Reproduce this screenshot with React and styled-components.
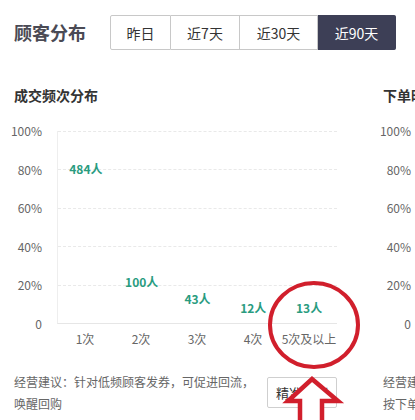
import React from "react";
import styled, { createGlobalStyle } from "styled-components";

const Global = createGlobalStyle`
  html, body { margin: 0; padding: 0; background: #fff; }
  body {
    width: 415px; height: 420px; overflow: hidden;
    font-family: "Noto Sans CJK SC", "Noto Sans", "Liberation Sans", sans-serif;
  }
`;

const Page = styled.div`
  position: relative;
  width: 415px;
  height: 420px;
  overflow: hidden;
`;

const Header = styled.div`
  display: flex;
  align-items: center;
  gap: 24px;
  padding: 15px 14px 0;
  height: 35px;
`;

const Title = styled.h1`
  margin: 0;
  font-size: 18px;
  font-weight: 700;
  color: #4a4a54;
  line-height: 35px;
  white-space: nowrap;
`;

const Tabs = styled.div`
  display: flex;
  height: 35px;
`;

const Tab = styled.button`
  width: ${(p) => p.$w}px;
  height: 35px;
  padding: 0;
  font-family: inherit;
  font-size: 14px;
  color: ${(p) => (p.$active ? "#fff" : "#333")};
  background: ${(p) => (p.$active ? "#3d3f56" : "#fff")};
  border: 1px solid ${(p) => (p.$active ? "#3d3f56" : "#c8c8c8")};
  border-left-width: ${(p) => (p.$first ? 1 : 0)}px;
  border-radius: ${(p) => (p.$first ? "2px 0 0 2px" : p.$last ? "0 2px 2px 0" : "0")};
  cursor: pointer;
`;

const Panels = styled.div`
  display: flex;
  gap: 46px;
  padding: 35px 0 0 14px;
`;

const Panel = styled.section`
  flex: 0 0 323px;
  display: flex;
  flex-direction: column;
`;

const PanelTitle = styled.h2`
  margin: 0;
  font-size: 14px;
  font-weight: 700;
  color: #333;
  line-height: 20px;
  white-space: nowrap;
`;

const Chart = styled.div`
  display: grid;
  grid-template-columns: 28px 280px;
  grid-template-rows: 193px auto;
  column-gap: 15px;
  margin-top: 26px;
`;

const YAxis = styled.div`
  margin: -8px 0 -8px;
  display: flex;
  flex-direction: column;
  justify-content: space-between;
  align-items: flex-end;
  font-size: 12px;
  line-height: 16px;
  color: #666;
`;

const Plot = styled.div`
  display: grid;
  border-left: 1px solid #eeeeee;
  border-bottom: 1px solid #e6e6e6;
`;

const GridLines = styled.div`
  grid-area: 1 / 1;
  display: flex;
  flex-direction: column;
`;

const GridLine = styled.div`
  flex: 1;
  border-top: 1px dashed #e9e9e9;
`;

const Bars = styled.div`
  grid-area: 1 / 1;
  display: grid;
  grid-template-columns: repeat(5, 1fr);
  align-items: end;
`;

const BarCol = styled.div`
  display: flex;
  flex-direction: column;
  align-items: center;
`;

const BarValue = styled.span`
  font-size: 12px;
  font-weight: 700;
  line-height: 14px;
  color: #2a9c7f;
  margin-bottom: 4px;
  white-space: nowrap;
`;

const Bar = styled.div`
  width: 24px;
  background: transparent;
`;

const XAxis = styled.div`
  grid-column: 2;
  display: grid;
  grid-template-columns: repeat(5, 1fr);
  margin-top: 7px;
  font-size: 12px;
  line-height: 16px;
  color: #666;
  text-align: center;
  white-space: nowrap;
`;

const Advice = styled.div`
  display: flex;
  justify-content: space-between;
  align-items: flex-start;
  margin-top: 24px;
`;

const AdviceText = styled.p`
  margin: 0;
  width: 241px;
  font-size: 12px;
  line-height: 22px;
  color: #666;
`;

const ActionButton = styled.button`
  width: 70px;
  height: 31px;
  margin-top: 6px;
  padding: 0;
  font-family: inherit;
  font-size: 13px;
  color: #333;
  background: #fff;
  border: 1px solid #cfcfcf;
  border-radius: 2px;
`;

const Annotation = styled.svg`
  position: absolute;
  left: 0;
  top: 0;
  pointer-events: none;
`;

const yTicks = ["100%", "80%", "60%", "40%", "20%", "0"];

function FrequencyChart({ title, data, labels, advice, action }) {
  const total = data.reduce((s, d) => s + d, 0) || 1;
  return (
    <Panel>
      <PanelTitle>{title}</PanelTitle>
      <Chart>
        <YAxis>
          {yTicks.map((t) => (
            <span key={t}>{t}</span>
          ))}
        </YAxis>
        <Plot>
          <GridLines>
            {[0, 1, 2, 3, 4].map((i) => (
              <GridLine key={i} />
            ))}
          </GridLines>
          <Bars>
            {data.map((d, i) => (
              <BarCol key={i}>
                {d > 0 && <BarValue>{d}人</BarValue>}
                <Bar style={{ height: `${(d / total) * 193}px` }} />
              </BarCol>
            ))}
          </Bars>
        </Plot>
        <XAxis>
          {labels.map((l) => (
            <span key={l}>{l}</span>
          ))}
        </XAxis>
      </Chart>
      <Advice>
        <AdviceText>{advice}</AdviceText>
        <ActionButton>{action}</ActionButton>
      </Advice>
    </Panel>
  );
}

export default function App() {
  const tabs = [
    { label: "昨日", w: 61 },
    { label: "近7天", w: 69 },
    { label: "近30天", w: 78 },
    { label: "近90天", w: 78 },
  ];
  return (
    <>
      <Global />
      <Page>
        <Header>
          <Title>顾客分布</Title>
          <Tabs>
            {tabs.map((t, i) => (
              <Tab
                key={t.label}
                $w={t.w}
                $first={i === 0}
                $last={i === tabs.length - 1}
                $active={i === 3}
              >
                {t.label}
              </Tab>
            ))}
          </Tabs>
        </Header>
        <Panels>
          <FrequencyChart
            title="成交频次分布"
            data={[484, 100, 43, 12, 13]}
            labels={["1次", "2次", "3次", "4次", "5次及以上"]}
            advice="经营建议：针对低频顾客发券，可促进回流，唤醒回购"
            action="精准营销"
          />
          <FrequencyChart
            title="下单时段分布"
            data={[120, 210, 180, 90, 52]}
            labels={["早", "中", "下午", "晚", "夜"]}
            advice="经营建议：结合顾客下单高峰时段推送活动，按下单时段调整营销"
            action="精准营销"
          />
        </Panels>
        <Annotation width="415" height="420" viewBox="0 0 415 420">
          <ellipse cx="314" cy="325" rx="44" ry="42" fill="none" stroke="#d11f2c" strokeWidth="4" />
          <polygon
            points="312,379 338,401 322,401 322,426 300,426 300,401 288,401"
            fill="#fff"
            stroke="#d11f2c"
            strokeWidth="4.5"
            strokeLinejoin="miter"
          />
        </Annotation>
      </Page>
    </>
  );
}
